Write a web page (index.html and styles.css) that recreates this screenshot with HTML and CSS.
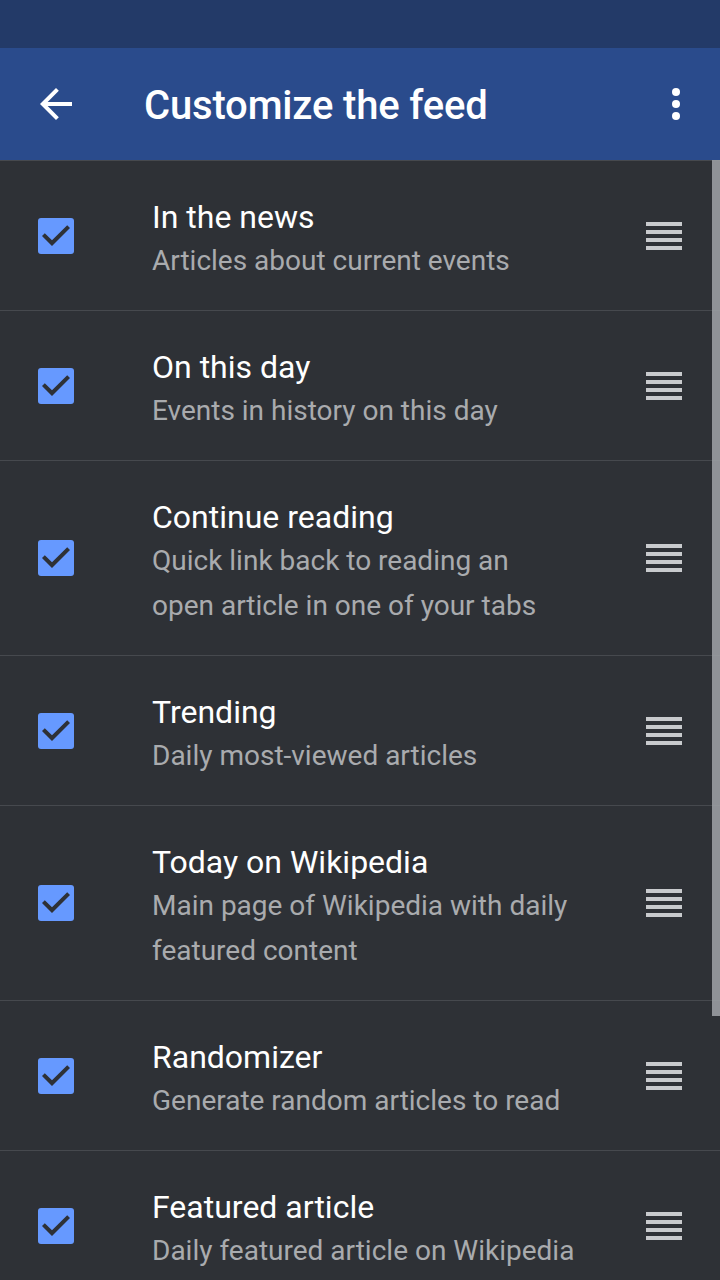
FILE: index.html
```html
<!DOCTYPE html>
<html lang="en">
<head>
<meta charset="utf-8">
<title>Customize the feed</title>
<link rel="stylesheet" href="styles.css">
</head>
<body>
<div class="screen">
  <div class="statusbar"></div>
  <header class="toolbar">
    <button class="icon-btn" aria-label="Back">
      <svg viewBox="0 0 24 24" width="48" height="48"><path fill="#fff" d="M20 11H7.83l5.59-5.59L12 4l-8 8 8 8 1.41-1.41L7.83 13H20v-2z"/></svg>
    </button>
    <h1 class="title">Customize the feed</h1>
    <button class="icon-btn more" aria-label="More options">
      <svg viewBox="0 0 24 24" width="48" height="48"><circle cx="12" cy="6" r="2" fill="#fff"/><circle cx="12" cy="12" r="2" fill="#fff"/><circle cx="12" cy="18" r="2" fill="#fff"/></svg>
    </button>
  </header>
  <main class="list">
    <div class="row">
      <span class="check"><svg viewBox="0 0 36 36" width="36" height="36"><path d="M14 28L4 18l2.8-2.8L14 22.3 29.2 7.2 32 10z" fill="#2e3136"/></svg></span>
      <div class="text"><div class="name">In the news</div><div class="desc">Articles about current events</div></div>
      <span class="handle"><i></i><i></i><i></i><i></i></span>
    </div>
    <div class="row">
      <span class="check"><svg viewBox="0 0 36 36" width="36" height="36"><path d="M14 28L4 18l2.8-2.8L14 22.3 29.2 7.2 32 10z" fill="#2e3136"/></svg></span>
      <div class="text"><div class="name">On this day</div><div class="desc">Events in history on this day</div></div>
      <span class="handle"><i></i><i></i><i></i><i></i></span>
    </div>
    <div class="row">
      <span class="check"><svg viewBox="0 0 36 36" width="36" height="36"><path d="M14 28L4 18l2.8-2.8L14 22.3 29.2 7.2 32 10z" fill="#2e3136"/></svg></span>
      <div class="text"><div class="name">Continue reading</div><div class="desc">Quick link back to reading an open article in one of your tabs</div></div>
      <span class="handle"><i></i><i></i><i></i><i></i></span>
    </div>
    <div class="row">
      <span class="check"><svg viewBox="0 0 36 36" width="36" height="36"><path d="M14 28L4 18l2.8-2.8L14 22.3 29.2 7.2 32 10z" fill="#2e3136"/></svg></span>
      <div class="text"><div class="name">Trending</div><div class="desc">Daily most-viewed articles</div></div>
      <span class="handle"><i></i><i></i><i></i><i></i></span>
    </div>
    <div class="row">
      <span class="check"><svg viewBox="0 0 36 36" width="36" height="36"><path d="M14 28L4 18l2.8-2.8L14 22.3 29.2 7.2 32 10z" fill="#2e3136"/></svg></span>
      <div class="text"><div class="name">Today on Wikipedia</div><div class="desc">Main page of Wikipedia with daily featured content</div></div>
      <span class="handle"><i></i><i></i><i></i><i></i></span>
    </div>
    <div class="row">
      <span class="check"><svg viewBox="0 0 36 36" width="36" height="36"><path d="M14 28L4 18l2.8-2.8L14 22.3 29.2 7.2 32 10z" fill="#2e3136"/></svg></span>
      <div class="text"><div class="name">Randomizer</div><div class="desc">Generate random articles to read</div></div>
      <span class="handle"><i></i><i></i><i></i><i></i></span>
    </div>
    <div class="row">
      <span class="check"><svg viewBox="0 0 36 36" width="36" height="36"><path d="M14 28L4 18l2.8-2.8L14 22.3 29.2 7.2 32 10z" fill="#2e3136"/></svg></span>
      <div class="text"><div class="name">Featured article</div><div class="desc">Daily featured article on Wikipedia</div></div>
      <span class="handle"><i></i><i></i><i></i><i></i></span>
    </div>
    <div class="scrollbar"></div>
  </main>
</div>
</body>
</html>
```

FILE: styles.css
```css
* { box-sizing: border-box; }
html, body {
  margin: 0;
  padding: 0;
  width: 720px;
  height: 1280px;
  overflow: hidden;
  background: #2e3136;
  font-family: Roboto, "Noto Sans", sans-serif;
}
.screen {
  width: 720px;
  height: 1280px;
  display: flex;
  flex-direction: column;
}
.statusbar {
  height: 48px;
  background: #233a68;
  flex: none;
}
.toolbar {
  height: 112px;
  flex: none;
  background: #2a4b8c;
  display: flex;
  align-items: center;
  padding: 0 20px 0 32px;
}
.icon-btn {
  width: 48px;
  height: 48px;
  padding: 0;
  border: 0;
  background: none;
  display: block;
  flex: none;
}
.icon-btn svg { display: block; }
.title {
  flex: 1;
  margin: 0 0 0 64px;
  padding-top: 4px;
  font-size: 40px;
  line-height: 48px;
  font-weight: 500;
  color: #fff;
  letter-spacing: -0.17px;
}
.list {
  position: relative;
  flex: 1;
  overflow: hidden;
}
.row {
  display: flex;
  align-items: center;
  padding: 0 38px;
  border-top: 1px solid #46494e;
}
.check {
  width: 36px;
  height: 36px;
  border-radius: 3px;
  background: #6699ff;
  flex: none;
  display: block;
}
.check svg { display: block; }
.text {
  flex: none;
  width: 424px;
  margin-left: 78px;
  padding: 35px 0 27px;
}
.name {
  font-size: 32px;
  line-height: 42px;
  color: #fff;
}
.desc {
  font-size: 28px;
  line-height: 45px;
  color: #a9abae;
}
.handle {
  margin-left: auto;
  width: 36px;
  display: flex;
  flex-direction: column;
  gap: 4px;
  flex: none;
}
.handle i {
  display: block;
  height: 4px;
  background: #c8cacd;
}
.scrollbar {
  position: absolute;
  right: 0;
  top: 0;
  width: 8px;
  height: 856px;
  background: rgba(160, 163, 168, 0.85);
}
```
